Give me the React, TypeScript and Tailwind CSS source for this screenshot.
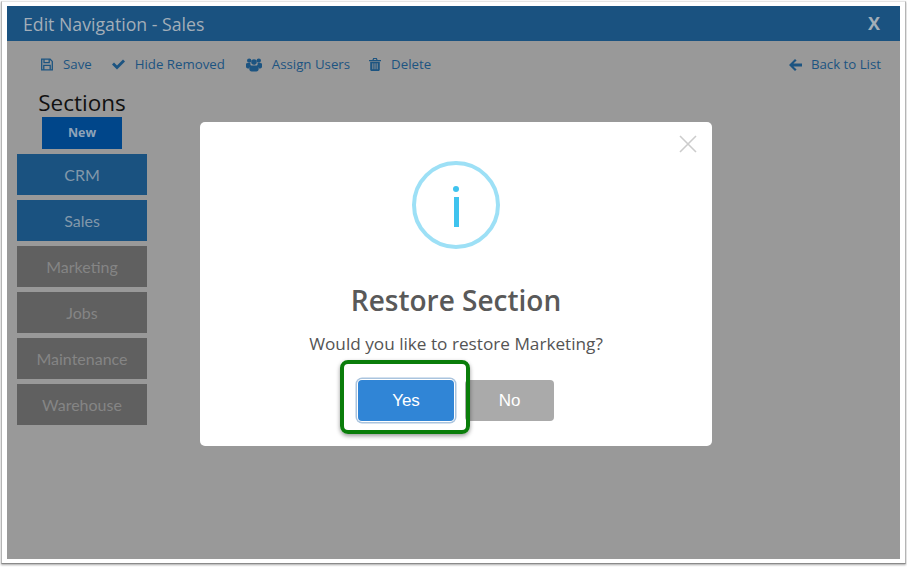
import type { ReactNode } from 'react'

function SaveIcon() {
  return (
    <svg width="12" height="13" viewBox="0 0 12 13" fill="none" stroke="currentColor" strokeWidth="1.3">
      <path d="M.7 1.2h8.4l2.2 2.2v8.4H.7z" />
      <path d="M3 1.2v3.4h5.2V1.2M2.8 11.8V7.4h6.4v4.4" />
    </svg>
  )
}

function CheckIcon() {
  return (
    <svg width="13" height="11" viewBox="0 0 13 11" fill="currentColor">
      <path d="M0 5.6 2 3.6 5 6.6 11 .6 13 2.6 5 10.6z" />
    </svg>
  )
}

function UsersIcon() {
  return (
    <svg width="16" height="14" viewBox="0 0 16 14" fill="currentColor">
      <circle cx="3.2" cy="2.6" r="2.2" />
      <circle cx="12.8" cy="2.6" r="2.2" />
      <circle cx="8" cy="4" r="2.8" />
      <path d="M0 5.8C0 5.2 1 5 3.2 5c.4 0 .8 0 1.2.1-.2 1.200.2 2.300 1 3.100C4 8.700 3.300 9.500 3 10.400 1 10.400 0 9.800 0 8.900z" />
      <path d="M16 5.800C16 5.200 15 5 12.800 5c-.4 0-.8 0-1.200.1.200 1.200-.2 2.300-1 3.100 1.400.5 2.100 1.300 2.400 2.200 2 0 3-.6 3-1.500z" />
      <path d="M5.300 7.600h5.400c1.300 0 2 1.400 2 3.200 0 1.800-1 2.700-2.400 2.700H5.700c-1.400 0-2.400-.9-2.400-2.700 0-1.800.7-3.200 2-3.200z" />
    </svg>
  )
}

function TrashIcon() {
  return (
    <svg width="12" height="13" viewBox="0 0 12 13" fill="currentColor">
      <path d="M4.200 0h3.600l.8 2H12v1.300H0V2h3.400zM5 1.100l-.3.900h2.600L7 1.100z" />
      <path fillRule="evenodd" d="M1.200 3.800h9.600v7.700c0 .8-.6 1.500-1.300 1.500h-7c-.7 0-1.300-.7-1.300-1.500zM3.400 5.200v6h.9v-6zM5.550 5.200v6h.9v-6zM7.700 5.200v6h.9v-6z" />
    </svg>
  )
}

function BackIcon() {
  return (
    <svg width="13" height="12" viewBox="0 0 13 12" fill="currentColor">
      <path d="M6 0 7.600 1.600 4.400 4.500H13v3H4.400L7.600 10.400 6 12 0 6z" />
    </svg>
  )
}

const actions: { label: string; icon: ReactNode; margin: string }[] = [
  { label: 'Save', icon: <SaveIcon />, margin: 'mr-[20px]' },
  { label: 'Hide Removed', icon: <CheckIcon />, margin: 'mr-[21px]' },
  { label: 'Assign Users', icon: <UsersIcon />, margin: 'mr-[19px]' },
  { label: 'Delete', icon: <TrashIcon />, margin: '' },
]

const sections = [
  { name: 'CRM', removed: false },
  { name: 'Sales', removed: false },
  { name: 'Marketing', removed: true },
  { name: 'Jobs', removed: true },
  { name: 'Maintenance', removed: true },
  { name: 'Warehouse', removed: true },
]

export default function App() {
  return (
    <div className="relative h-[567px] w-[907px] overflow-hidden bg-white font-['Open_Sans',sans-serif]">
      <div className="absolute inset-x-[1px] top-[1px] bottom-[3px] border border-[#b5b5b5] border-b-[#8a8a8a] border-t-[#e4e4e4] shadow-[0_1px_2px_rgba(0,0,0,0.35)]" />
      <div className="relative ml-[7px] mt-[6px] flex h-[553px] w-[893px] flex-col bg-[#999999]">
        <header className="flex h-[35px] shrink-0 items-center justify-between bg-[#1a5280] pl-[16px] pr-[20px]">
          <span className="pt-[1px] text-[17.7px] text-[#a3aeb8]">Edit Navigation - Sales</span>
          <span className="text-[18px] font-bold text-[#a3aeb8]">X</span>
        </header>

        <div className="flex h-[46px] shrink-0 items-center justify-between pl-[34px] pr-[19px] pt-[1px] text-[13.25px] text-[#1c5481]">
          <div className="flex items-center">
            {actions.map((action) => (
              <span key={action.label} className={`flex items-center gap-[10px] ${action.margin}`}>
                {action.icon}
                {action.label}
              </span>
            ))}
          </div>
          <span className="flex items-center gap-[9px]">
            <BackIcon />
            Back to List
          </span>
        </div>

        <aside className="ml-[10px] flex w-[130px] flex-col items-stretch font-['Lato',sans-serif]">
          <h2 className="mt-[3px] h-[25px] text-center font-['Open_Sans',sans-serif] text-[22.5px] leading-[25px] text-[#111111]">Sections</h2>
          <button className="mx-auto mt-[2px] h-[32px] w-[80px] bg-[#00468a] font-['Open_Sans',sans-serif] text-[12.5px] font-bold text-[#8fa3b8]">New</button>
          <div className="mt-[5px] flex flex-col gap-[5px]">
            {sections.map((section) => (
              <div
                key={section.name}
                className={section.removed
                  ? 'flex h-[41px] items-center justify-center bg-[#606060] text-[16px] text-[#858585]'
                  : 'flex h-[41px] items-center justify-center bg-[#1a5280] text-[16px] text-[#8298aa]'}
              >
                {section.name}
              </div>
            ))}
          </div>
        </aside>
      </div>

      {/* modal over the dimmed page */}
      <div className="absolute left-[200px] top-[122px] flex h-[324px] w-[512px] flex-col items-center rounded-[5px] bg-white">
        <svg className="absolute right-[15px] top-[13px]" width="18" height="18" viewBox="0 0 18 18" fill="none" stroke="#cccccc" strokeWidth="1.6">
          <path d="M1 1 17 17M17 1 1 17" />
        </svg>
        <div className="mt-[39px] flex h-[88px] w-[88px] shrink-0 flex-col items-center rounded-full border-[4px] border-[#9de0f6]">
          <span className="mt-[21px] h-[6px] w-[6px] rounded-full bg-[#3fc3ee]" />
          <span className="mt-[5px] h-[30px] w-[5px] bg-[#3fc3ee]" />
        </div>
        <h1 className="mt-[31px] text-[28px] font-semibold leading-[40px] text-[#595959]">Restore Section</h1>
        <p className="mt-[12px] text-[17.2px] leading-[24px] text-[#545454]">Would you like to restore Marketing?</p>
        <div className="mt-[24px] flex items-center gap-[11px] font-['Liberation_Sans',sans-serif] text-[17px]">
          <button className="h-[41px] w-[96px] rounded-[4px] bg-[#3085d6] text-white shadow-[0_0_0_1px_#ffffff,0_0_0_2.5px_#aac4de]">Yes</button>
          <button className="h-[41px] w-[89px] rounded-[4px] bg-[#aaaaaa] text-white">No</button>
        </div>
      </div>

      {/* callout drawn around the Yes button */}
      <div className="absolute left-[340px] top-[360px] h-[74px] w-[130px] rounded-[8px] border-[4px] border-[#0a7d0a] shadow-[0_2px_4px_rgba(0,0,0,0.4)]" />
    </div>
  )
}
